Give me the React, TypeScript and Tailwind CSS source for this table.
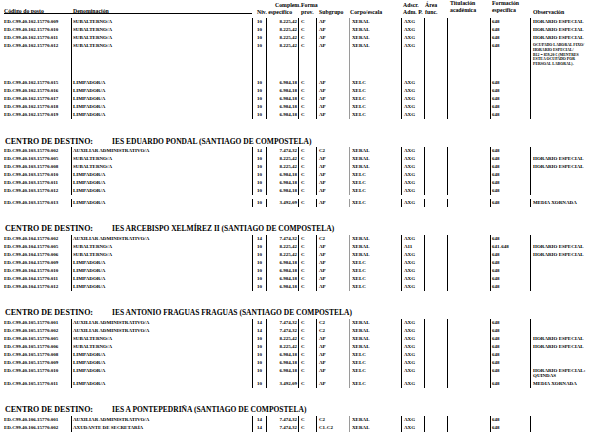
import React from 'react';

type Row = {
    code: string;
    den: string;
    niv: string;
    comp: string;
    sub: string;
    corpo: string;
    adscr: string;
    form: string;
    obs?: string[];
    h?: string;
    obsClass?: string;
};

const SUB = { den: 'SUBALTERNO/A', niv: '10', comp: '8.225,42', sub: 'AP', corpo: 'XERAL', adscr: 'AXG', form: '648' };
const LIM = { den: 'LIMPADOR/A', niv: '10', comp: '6.984,18', sub: 'AP', corpo: 'XELC', adscr: 'AXG', form: '648' };
const AUX = { den: 'AUXILIAR ADMINISTRATIVO/A', niv: '14', comp: '7.474,32', sub: 'C2', corpo: 'XERAL', adscr: 'AXG', form: '648' };
const HE = ['HORARIO ESPECIAL'];
const MX = ['MEDIA XORNADA'];

const groups: { title: string | null; prefix: string; rows: Row[] }[] = [
    {
        title: null,
        prefix: 'ED.C99.40.102.15770.',
        rows: [
            { code: '009', ...SUB, obs: HE },
            { code: '010', ...SUB, obs: HE },
            { code: '011', ...SUB, obs: HE },
            {
                code: '012', ...SUB, h: 'h-[37.5px]',
                obsClass: 'pt-[1.8px] text-[3.9px] leading-[4.7px]',
                obs: ['OCUPADO LABORAL FIXO/', 'HORARIO ESPECIAL/', 'B12 = 859,20 € (MENTRES', 'ESTEA OCUPADO POR', 'PERSOAL LABORAL).'],
            },
            { code: '015', ...LIM },
            { code: '016', ...LIM },
            { code: '017', ...LIM },
            { code: '018', ...LIM },
            { code: '019', ...LIM },
        ],
    },
    {
        title: 'IES EDUARDO PONDAL (SANTIAGO DE COMPOSTELA)',
        prefix: 'ED.C99.40.103.15770.',
        rows: [
            { code: '002', ...AUX },
            { code: '005', ...SUB, obs: HE },
            { code: '008', ...SUB, obs: HE },
            { code: '010', ...LIM },
            { code: '011', ...LIM },
            { code: '012', ...LIM },
            { code: '013', ...LIM, comp: '3.492,09', obs: MX, h: 'h-[11.5px] pt-[3.5px]' },
        ],
    },
    {
        title: 'IES ARCEBISPO XELMÍREZ II (SANTIAGO DE COMPOSTELA)',
        prefix: 'ED.C99.40.104.15770.',
        rows: [
            { code: '002', ...AUX },
            { code: '005', ...SUB, adscr: 'A11', form: '641-648', obs: HE },
            { code: '006', ...SUB, obs: HE },
            { code: '009', ...LIM },
            { code: '010', ...LIM },
            { code: '011', ...LIM },
            { code: '012', ...LIM },
        ],
    },
    {
        title: 'IES ANTONIO FRAGUAS FRAGUAS (SANTIAGO DE COMPOSTELA)',
        prefix: 'ED.C99.40.105.15770.',
        rows: [
            { code: '001', ...AUX },
            { code: '002', ...AUX },
            { code: '005', ...SUB, obs: HE },
            { code: '006', ...SUB, obs: HE },
            { code: '008', ...LIM },
            { code: '009', ...LIM },
            {
                code: '010', ...LIM, h: 'h-[13px]',
                obsClass: 'pt-[1.5px] leading-[5px]',
                obs: ['HORARIO ESPECIAL:', 'QUINDAS'],
            },
            { code: '011', ...LIM, comp: '3.492,09', obs: MX },
        ],
    },
    {
        title: 'IES A PONTEPEDRIÑA (SANTIAGO DE COMPOSTELA)',
        prefix: 'ED.C99.40.106.15770.',
        rows: [
            { code: '001', ...AUX },
            { code: '002', ...AUX, den: 'AXUDANTE DE SECRETARÍA', sub: 'C1-C2' },
        ],
    },
];

function DataRow({ r, prefix }: { r: Row; prefix: string }) {
    return (
        <div className={`flex ${r.h ?? 'h-[8px]'} text-[5px] leading-[8px] font-bold whitespace-nowrap`}>
            <div className="w-[71px] pl-[4px]">{prefix + r.code}</div>
            <div className="w-[181px] border-l border-black pl-[1px]">{r.den}</div>
            <div className="w-[14px] border-l border-black text-center">{r.niv}</div>
            <div className="w-[32px] border-l border-black text-right pr-[1px]">{r.comp}</div>
            <div className="w-[18px] border-l border-black pl-[2px]">C</div>
            <div className="w-[33px] border-l border-black pl-[2px]">{r.sub}</div>
            <div className="w-[52px] border-l border-[#9a9a9a] pl-[2px]">{r.corpo}</div>
            <div className="w-[23px] border-l border-black pl-[2px]">{r.adscr}</div>
            <div className="w-[23px] border-l border-black" />
            <div className="w-[43px] border-l border-black" />
            <div className="w-[40px] border-l border-black pl-[1px]">{r.form}</div>
            <div className={`w-[86px] border-l border-black pl-[2px] ${r.obsClass ?? ''}`}>
                {r.obs?.map((l, i) => <div key={i}>{l}</div>)}
            </div>
        </div>
    );
}

function Header() {
    return (
        <div className="flex h-[17.5px] text-[5.8px] leading-[7px] font-bold whitespace-nowrap">
            <div className="ml-[4px] w-[67px] h-[14px] border-b border-black pt-[8px] leading-[6px]">Código do posto</div>
            <div className="w-[181px] h-[14px] border-b border-black pt-[8px] pl-[2px] leading-[6px]">Denominación</div>
            <div className="w-[46px] pt-[1.5px]">
                <div className="pl-[23px]">Complem.</div>
                <div className="pl-[5px]">Niv. específico</div>
            </div>
            <div className="w-[18px] pt-[1.5px] pl-[3px]">
                <div>Forma</div>
                <div>prov.</div>
            </div>
            <div className="w-[33px] pt-[8.5px] pl-[3px]">Subgrupo</div>
            <div className="w-[52px] pt-[8.5px] pl-[1px]">Corpo/escala</div>
            <div className="w-[23px] pt-[1.5px] pl-[2px]">
                <div>Adscr.</div>
                <div>Adm. P.</div>
            </div>
            <div className="w-[23px] pt-[1.5px] pl-[1px]">
                <div>Área</div>
                <div>func.</div>
            </div>
            <div className="w-[43px] pl-[3px]">
                <div>Titulación</div>
                <div>académica</div>
            </div>
            <div className="w-[40px] pl-[2px]">
                <div>Formación</div>
                <div>específica</div>
            </div>
            <div className="w-[86px] pt-[8.5px] pl-[3px]">Observación</div>
        </div>
    );
}

export default function App() {
    return (
        <div className="w-[616px] h-[439px] overflow-hidden bg-white text-black [font-family:'Liberation_Serif','Times_New_Roman',serif]">
            <Header />
            {groups.map((g, gi) => (
                <div key={gi}>
                    {g.title && (
                        <div className="h-[28px] pt-[17.5px] pl-[5px] leading-[10px] font-bold whitespace-nowrap flex items-baseline">
                            <span className="w-[107px] text-[8px]">CENTRO DE DESTINO:</span>
                            <span className="text-[7.5px]">{g.title}</span>
                        </div>
                    )}
                    {g.rows.map((r, ri) => (
                        <DataRow key={ri} r={r} prefix={g.prefix} />
                    ))}
                </div>
            ))}
        </div>
    );
}
